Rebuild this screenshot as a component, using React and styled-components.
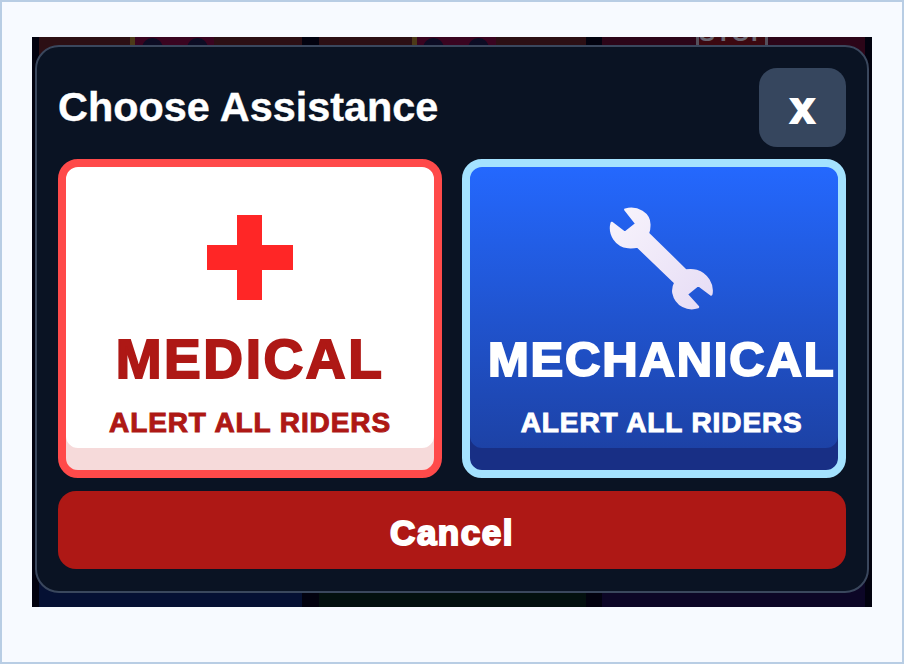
import React from "react";
import styled, { createGlobalStyle } from "styled-components";

const Global = createGlobalStyle`
  html, body { margin: 0; padding: 0; }
  body { width: 904px; height: 664px; overflow: hidden; font-family: "Liberation Sans", Arial, sans-serif; }
  * { box-sizing: border-box; }
`;

const Frame = styled.div`
  width: 904px; height: 664px;
  background: #f7faff;
  border: 2px solid #b8cde4;
  padding: 35px 30px 55px 30px;
`;

const Stage = styled.div`
  position: relative;
  width: 840px; height: 570px;
  background: #02020f;
  overflow: hidden;
  padding: 0 7px;
`;

const BackGrid = styled.div`
  display: grid;
  grid-template-columns: 263px 267px 263px;
  grid-template-rows: 280px 290px;
  column-gap: 16.5px;
  height: 570px;
`;

const Tile = styled.div`
  position: relative;
  background: ${p => p.$bg};
`;

const RiderStrip = styled.div`
  position: absolute;
  top: 0;
  left: ${p => p.$left}px;
  width: 84px;
  height: 40px;
  background: #3a0420;
  border-left: 5px solid #4c3a18;
  display: flex;
  justify-content: center;
  gap: 24px;
`;

const RiderDot = styled.span`
  width: 21px; height: 21px;
  margin-top: 1px;
  border-radius: 50%;
  background: #0c0c24;
`;

const StopSign = styled.div`
  position: absolute;
  top: -16px;
  left: 94px;
  width: 72px;
  height: 64px;
  background: #3c0810;
  border: 3px solid #55505c;
  color: #6a6672;
  font: 700 24px/18px "Liberation Sans", Arial, sans-serif;
  letter-spacing: 1px;
  text-align: center;
`;

const Modal = styled.div`
  position: absolute;
  left: 3px; top: 8px;
  width: 834px; height: 548px;
  background: #0a1323;
  border: 2px solid #3a475d;
  border-radius: 24px;
  padding: 21px;
  display: flex;
  flex-direction: column;
`;

const Header = styled.div`
  display: flex;
  justify-content: space-between;
  align-items: center;
  height: 79px;
  margin-bottom: 12px;
`;

const Title = styled.h2`
  margin: 0;
  font-size: 41.4px;
  font-weight: 700;
  color: #fff;
  line-height: 1;
  -webkit-text-stroke: 0.4px #fff;
`;

const Close = styled.button`
  width: 87px; height: 79px;
  border: 0;
  border-radius: 18px;
  background: #36465e;
  color: #fff;
  font: 700 44px/1 "Liberation Sans", Arial, sans-serif;
  -webkit-text-stroke: 2px #fff;
  padding: 0;
`;

const Choices = styled.div`
  display: grid;
  grid-template-columns: 384px 384px;
  column-gap: 20px;
  margin-bottom: 13px;
`;

const Choice = styled.button`
  height: 319px;
  padding: 0 18px;
  border: 8px solid ${p => p.$border};
  border-radius: 20px;
  background: ${p => p.$bg};
  color: ${p => p.$fg};
  box-shadow: inset 0 -22px 0 ${p => p.$lip};
  display: block;
  font-family: "Liberation Sans", Arial, sans-serif;
`;

const Stack = styled.div`
  display: flex;
  flex-direction: column;
  align-items: center;
  width: max-content;
  min-width: 100%;
  height: 100%;
`;

const IconSlot = styled.div`
  height: 85px;
  margin-top: 48px;
  display: flex;
  align-items: center;
  justify-content: center;
`;

const Label = styled.div`
  margin-top: ${p => p.$top}px;
  height: 56px;
  font-size: ${p => p.$size}px;
  line-height: 56px;
  font-weight: 700;
  letter-spacing: ${p => p.$track}px;
  white-space: nowrap;
  -webkit-text-stroke: 2px ${p => p.$fg};
`;

const Sub = styled.div`
  margin-top: 20px;
  font-size: 28px;
  line-height: 32px;
  font-weight: 700;
  letter-spacing: 0.9px;
  white-space: nowrap;
  -webkit-text-stroke: 1px ${p => p.$fg};
`;

const Cancel = styled.button`
  height: 78px;
  border: 0;
  border-radius: 18px;
  background: #ae1815;
  color: #fff;
  font: 700 35px/1 "Liberation Sans", Arial, sans-serif;
  letter-spacing: 1.5px;
  -webkit-text-stroke: 2px #fff;
  padding: 4px 0 0;
`;

const Cross = () => (
  <svg width="86" height="85" viewBox="0 0 86 85">
    <path d="M30 0H55V30H86V55H55V85H30V55H0V30H30Z" fill="#ff2626" />
  </svg>
);

const Wrench = () => (
  <svg width="107" height="104" viewBox="85 45 320 312" style={{ flex: "none" }}>
    <defs>
      <linearGradient id="wr" x1="0" y1="0" x2="1" y2="1">
        <stop offset="0" stopColor="#f8f4fc" />
        <stop offset="1" stopColor="#e6dcf5" />
      </linearGradient>
    </defs>
    <path
      fill="url(#wr)"
      stroke="url(#wr)"
      strokeWidth="8"
      strokeLinejoin="round"
      d="M137 56 C170 46 211 68 208 105 Q208 118 204 127 L318 239 Q335 236 350 240 C381 249 400 282 394 310 L355 281 L320 310 L354 348 C325 358 289 343 281 305 Q279 290 287 275 L173 166 Q160 169 145 168 C109 164 87 130 96 96 L135 126 L170 98 Z"
    />
  </svg>
);

export default function App() {
  return (
    <Frame>
      <Global />
      <Stage>
        <BackGrid>
          <Tile $bg="#2c0f14">
            <RiderStrip $left={91}><RiderDot /><RiderDot /></RiderStrip>
          </Tile>
          <Tile $bg="#2c0f14">
            <RiderStrip $left={93}><RiderDot /><RiderDot /></RiderStrip>
          </Tile>
          <Tile $bg="#2c0518">
            <StopSign>STOP</StopSign>
          </Tile>
          <Tile $bg="#051033" />
          <Tile $bg="#03100f" />
          <Tile $bg="#0c0626" />
        </BackGrid>
        <Modal>
          <Header>
            <Title>Choose Assistance</Title>
            <Close>x</Close>
          </Header>
          <Choices>
            <Choice $border="#ff4a4a" $bg="#fff" $fg="#ae1815" $lip="#f6dada">
              <Stack>
                <IconSlot><Cross /></IconSlot>
                <Label $fg="#ae1815" $size={55} $track={2.6} $top={31}>MEDICAL</Label>
                <Sub $fg="#ae1815">ALERT ALL RIDERS</Sub>
              </Stack>
            </Choice>
            <Choice $border="#a4e2ff" $bg="linear-gradient(#2468fe, #1c3f9f)" $fg="#fff" $lip="#182f85">
              <Stack>
                <IconSlot><Wrench /></IconSlot>
                <Label $fg="#fff" $size={49} $track={1.8} $top={31}>MECHANICAL</Label>
                <Sub $fg="#fff">ALERT ALL RIDERS</Sub>
              </Stack>
            </Choice>
          </Choices>
          <Cancel>Cancel</Cancel>
        </Modal>
      </Stage>
    </Frame>
  );
}
